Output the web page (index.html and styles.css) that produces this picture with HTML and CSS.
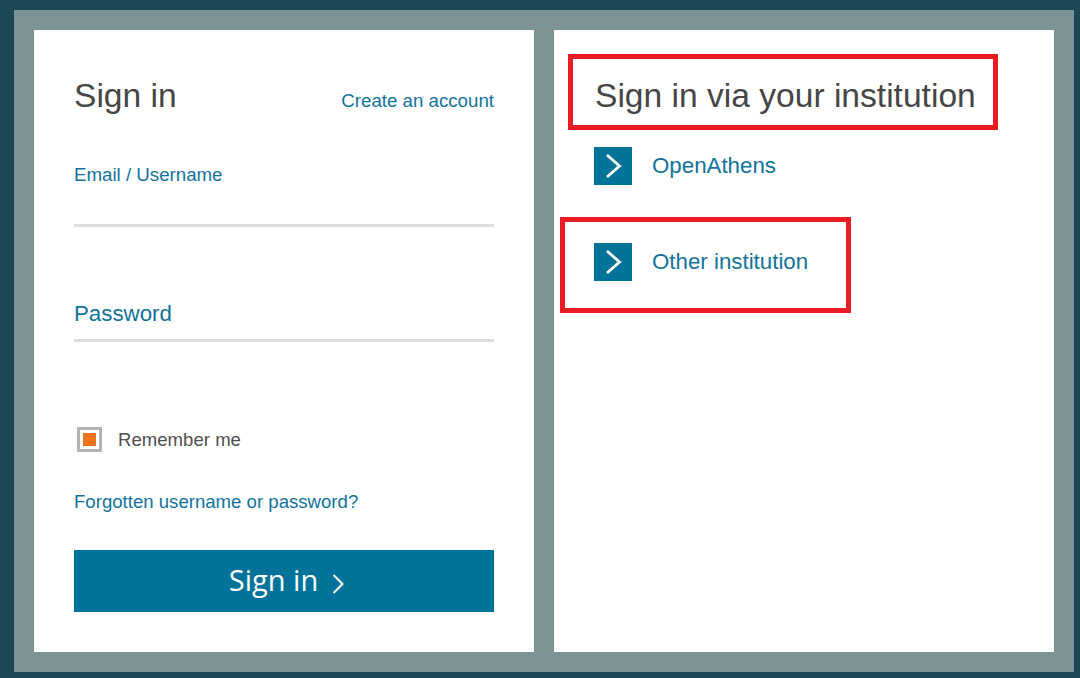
FILE: index.html
```html
<!DOCTYPE html>
<html lang="en">
<head>
<meta charset="utf-8">
<title>Sign in</title>
<link rel="stylesheet" href="styles.css">
</head>
<body>
<div class="frame">
  <section class="panel login">
    <div class="login-head">
      <h1 class="title">Sign in</h1>
      <a class="link create" href="#">Create an account</a>
    </div>
    <div class="field">
      <label class="field-label">Email / Username</label>
      <div class="field-input"></div>
    </div>
    <div class="field field-pass">
      <div class="field-input pass-input">Password</div>
    </div>
    <div class="remember">
      <span class="checkbox"><span class="check-fill"></span></span>
      <span class="remember-text">Remember me</span>
    </div>
    <a class="link forgot" href="#">Forgotten username or password?</a>
    <button class="btn">Sign in <svg class="btn-chev" width="12" height="20" viewBox="0 0 12 20"><path d="M1.5 1 L10.5 10 L1.5 19" fill="none" stroke="#fff" stroke-width="2"/></svg></button>
  </section>
  <section class="panel inst">
    <h2 class="title inst-title">Sign in via your institution</h2>
    <ul class="inst-list">
      <li class="inst-item">
        <span class="arrow-box"><svg width="38" height="38" viewBox="0 0 38 38"><path d="M13 8 L25.5 19 L13 30" fill="none" stroke="#fff" stroke-width="2.8"/></svg></span>
        <a class="inst-link" href="#">OpenAthens</a>
      </li>
      <li class="inst-item">
        <span class="arrow-box"><svg width="38" height="38" viewBox="0 0 38 38"><path d="M13 8 L25.5 19 L13 30" fill="none" stroke="#fff" stroke-width="2.8"/></svg></span>
        <a class="inst-link" href="#">Other institution</a>
      </li>
    </ul>
    <div class="mark mark-title"></div>
    <div class="mark mark-other"></div>
  </section>
</div>
</body>
</html>
```
FILE: styles.css
```css
* { box-sizing: border-box; }
html, body { margin: 0; padding: 0; }
body {
  background: #1c4855;
  width: 1080px;
  height: 678px;
  font-family: "Liberation Sans", Arial, sans-serif;
  padding: 10px 0 0 14px;
}
.frame {
  width: 1060px;
  height: 662px;
  background: #7d9395;
  padding: 20px;
  display: flex;
  gap: 20px;
}
.panel {
  background: #fff;
  width: 500px;
  height: 622px;
  position: relative;
}
.login { padding: 46px 40px 0 40px; }
.login-head {
  display: flex;
  justify-content: space-between;
  align-items: baseline;
}
.title {
  margin: 0;
  font-weight: normal;
  font-size: 33.6px;
  line-height: 40px;
  color: #464646;
}
.link { color: #11739b; text-decoration: none; font-size: 18.6px; }
.create { font-size: 18.7px; }
.field { margin-top: 48px; }
.field-label {
  display: block;
  color: #11739b;
  font-size: 18.7px;
  line-height: 22px;
}
.field-input {
  height: 41px;
  border-bottom: 3px solid #dcdcdc;
}
.field-pass { margin-top: 62px; }
.pass-input {
  height: 53px;
  font-size: 22.3px;
  line-height: 50px;
  color: #11739b;
}
.remember {
  margin-top: 85px;
  display: flex;
  align-items: center;
  gap: 16px;
  padding-left: 3px;
}
.checkbox {
  width: 25px;
  height: 25px;
  border: 3px solid #b4b4b4;
  padding: 3px;
  display: block;
}
.check-fill { display: block; width: 13px; height: 13px; background: #ec7421; }
.remember-text { color: #505050; font-size: 18.6px; line-height: 22px; }
.forgot { display: block; margin-top: 39px; line-height: 22px; }
.btn {
  margin-top: 37px;
  width: 420px;
  height: 62px;
  border: 0;
  background: #00739a;
  color: #fff;
  font-family: "Open Sans", "Noto Sans", sans-serif;
  font-size: 29px;
  display: flex;
  align-items: center;
  justify-content: center;
  gap: 14px;
  padding: 0 0 4px 5px;
}
.btn-chev { margin-top: 10px; }
.inst { padding: 46px 40px 0 40px; }
.inst-title { padding-left: 1px; }
.inst-list { list-style: none; margin: 31px 0 0 0; padding: 0; }
.inst-item {
  display: flex;
  align-items: center;
  gap: 20px;
  height: 38px;
  margin-bottom: 58px;
}
.arrow-box { width: 38px; height: 38px; background: #00739a; display: block; }
.arrow-box svg { display: block; }
.inst-link { color: #11739b; text-decoration: none; font-size: 22.3px; }
.mark { position: absolute; border: 5px solid #ec1c24; }
.mark-title { left: 14px; top: 24px; width: 430px; height: 76px; }
.mark-other { left: 6px; top: 187px; width: 291px; height: 96px; }
```
